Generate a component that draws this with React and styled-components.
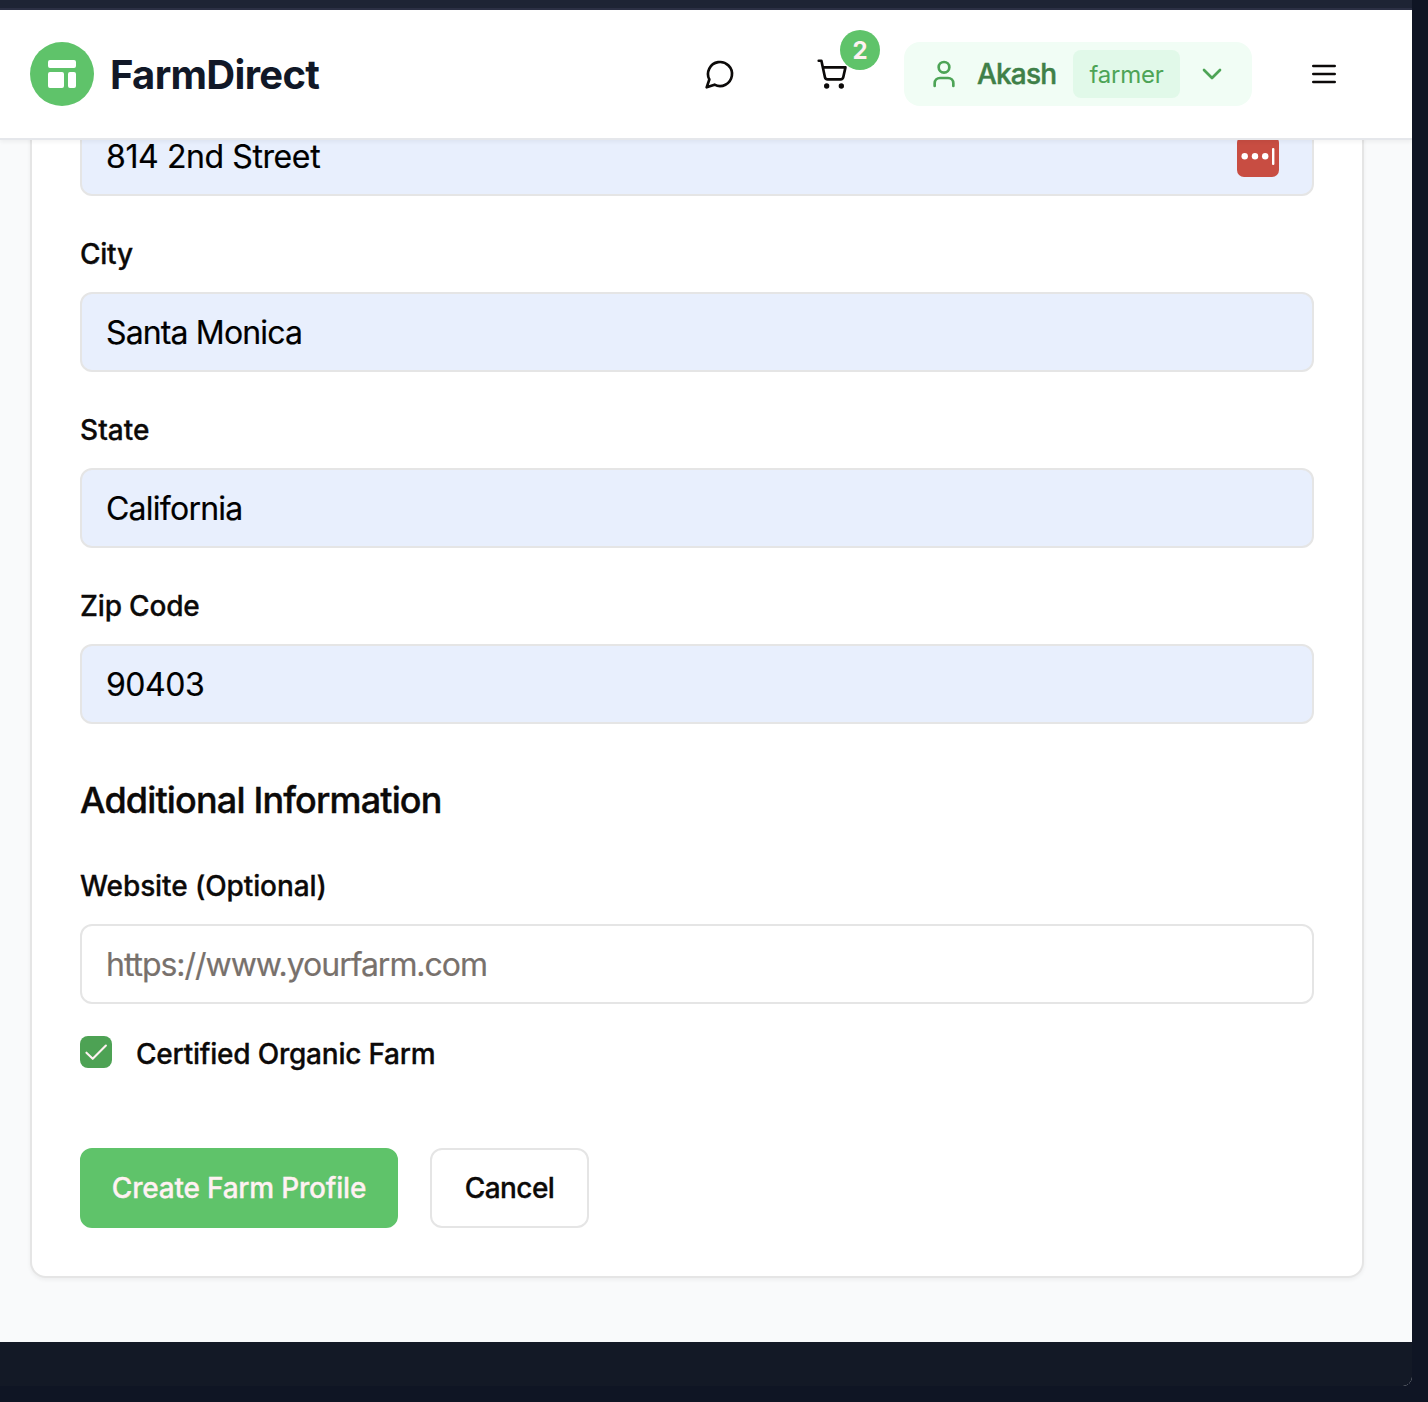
import React from "react";
import styled, { createGlobalStyle } from "styled-components";

const GlobalStyle = createGlobalStyle`
  *, *::before, *::after { box-sizing: border-box; }
  body {
    margin: 0;
    background: #0f1524;
    color: #0c0a09;
    font-family: Inter, "Liberation Sans", sans-serif;
    -webkit-font-smoothing: antialiased;
  }
  button, input { font-family: inherit; }
`;

const Desktop = styled.div`
  display: flex;
  flex-direction: column;
  height: 1402px;
  padding: 0 16px 16px 0;
  overflow: hidden;
`;

const BrowserBar = styled.div`
  flex: none;
  height: 10px;
  background: #1e2434;
  border-bottom: 2px solid #2c3044;
`;

const Window = styled.div`
  flex: 1;
  min-height: 0;
  display: flex;
  flex-direction: column;
  overflow: hidden;
  border-bottom-right-radius: 9px;
  background: #f9fafb;
`;

const Header = styled.header`
  position: relative;
  z-index: 1;
  flex: none;
  display: flex;
  align-items: center;
  height: 130px;
  padding: 0 56px 0 30px;
  background: #fff;
  border-bottom: 2px solid #e5e7eb;
  box-shadow: 0 2px 4px rgba(0, 0, 0, 0.05);
`;

const Brand = styled.div`
  display: flex;
  align-items: center;
  gap: 16px;
  margin-right: auto;
`;

const LogoMark = styled.span`
  display: flex;
  align-items: center;
  justify-content: center;
  width: 64px;
  height: 64px;
  border-radius: 50%;
  background: #5fc36a;
  color: #fff;
`;

const BrandName = styled.span`
  padding-top: 2px;
  font-size: 40px;
  line-height: 56px;
  font-weight: 700;
  letter-spacing: -0.7px;
  color: #111827;
`;

const IconButton = styled.button`
  position: relative;
  display: flex;
  align-items: center;
  justify-content: center;
  width: 80px;
  height: 80px;
  margin: 0 ${(p) => p.$after || 0}px 0 0;
  padding: 0;
  border: 0;
  background: none;
  color: #0c0a09;
`;

const CountBadge = styled.span`
  position: absolute;
  top: -4px;
  right: -8px;
  display: flex;
  align-items: center;
  justify-content: center;
  width: 40px;
  height: 40px;
  border-radius: 50%;
  background: #5fc36a;
  color: #fff1f2;
  font-size: 24px;
  font-weight: 700;
`;

const UserMenu = styled.button`
  display: flex;
  align-items: center;
  width: 348px;
  height: 64px;
  margin: 0 32px 0 0;
  padding: 0 24px;
  border: 0;
  border-radius: 16px;
  background: #f1fdf5;
  color: #4da456;
`;

const UserName = styled.span`
  width: 80px;
  margin: 0 16px 0 17px;
  font-size: 28px;
  font-weight: 500;
  letter-spacing: -0.82px;
  -webkit-text-stroke: 0.45px currentColor;
  text-align: left;
  white-space: nowrap;
  color: #3f8048;
`;

const RoleTag = styled.span`
  display: flex;
  align-items: center;
  justify-content: center;
  width: 107px;
  height: 48px;
  margin-right: 16px;
  border-radius: 8px;
  background: #e1f9e9;
  font-size: 24px;
  letter-spacing: -0.2px;
  color: #4da456;
`;

const Content = styled.main`
  flex: 1;
  min-height: 0;
  display: flex;
  flex-direction: column;
  justify-content: flex-end;
  overflow: hidden;
`;

const Card = styled.form`
  flex: none;
  margin: 0 48px 64px 30px;
  padding: 48px;
  border: 2px solid #e5e5e5;
  border-radius: 16px;
  background: #fff;
  box-shadow: 0 2px 4px rgba(0, 0, 0, 0.05);
`;

const Fields = styled.div`
  display: flex;
  flex-direction: column;
  gap: 44px;
`;

const Field = styled.div`
  display: flex;
  flex-direction: column;
  gap: 24px;
`;

const Label = styled.label`
  font-size: 28px;
  line-height: 28px;
  font-weight: 500;
  letter-spacing: ${(p) => p.$tracking || 0}px;
  -webkit-text-stroke: 0.3px currentColor;
`;

const InputShell = styled.div`
  display: flex;
  align-items: center;
  height: 80px;
  padding: 0 33px 0 24px;
  border: 2px solid #e5e5e5;
  border-radius: 12px;
  background: ${(p) => (p.$filled ? "#e8effd" : "#fff")};
`;

const TextInput = styled.input`
  flex: 1;
  min-width: 0;
  height: 60px;
  padding: 1px 0 0;
  border: 0;
  outline: 0;
  background: transparent;
  color: #000;
  font-size: 32px;
  letter-spacing: ${(p) => p.$tracking || 0}px;
  -webkit-text-stroke: 0.2px currentColor;
  &::placeholder { color: #78716c; opacity: 1; }
`;

const SectionTitle = styled.h3`
  margin: 56px 0 52px;
  font-size: 36px;
  line-height: 40px;
  font-weight: 500;
  letter-spacing: -0.84px;
  -webkit-text-stroke: 0.4px currentColor;
`;

const CheckRow = styled.div`
  display: flex;
  align-items: center;
  gap: 24px;
  height: 32px;
  margin-top: 32px;
`;

const CheckLabel = styled(Label)`
  padding-top: 4px;
`;

const CheckBox = styled.span`
  display: flex;
  align-items: center;
  justify-content: center;
  width: 32px;
  height: 32px;
  border-radius: 8px;
  background: #4da254;
  color: #fff1f2;
`;

const Actions = styled.div`
  display: flex;
  gap: 32px;
  margin-top: 80px;
`;

const Button = styled.button`
  width: ${(p) => p.$width}px;
  height: 80px;
  padding: 0;
  border: 2px solid ${(p) => (p.$primary ? "#5fc36a" : "#e5e5e5")};
  border-radius: 12px;
  background: ${(p) => (p.$primary ? "#5fc36a" : "#fff")};
  color: ${(p) => (p.$primary ? "#fff1f2" : "#0c0a09")};
  font-size: 28px;
  font-weight: 500;
  letter-spacing: ${(p) => p.$tracking || 0}px;
  -webkit-text-stroke: 0.3px currentColor;
  white-space: nowrap;
`;

const Footer = styled.footer`
  flex: none;
  height: 44px;
  background: #131926;
`;

const Icon = ({ children, size = 32, stroke = 2 }) => (
  <svg width={size} height={size} viewBox="0 0 24 24" fill="none" stroke="currentColor"
    strokeWidth={stroke} strokeLinecap="round" strokeLinejoin="round">
    {children}
  </svg>
);

const PasswordIcon = () => (
  <svg width="42" height="41" viewBox="0 0 42 41">
    <rect width="42" height="41" rx="7" fill="#c84d42" />
    <circle cx="7.7" cy="20.2" r="3.2" fill="#fff" />
    <circle cx="18" cy="20.2" r="3.2" fill="#fff" />
    <circle cx="28.2" cy="20.2" r="3.2" fill="#fff" />
    <rect x="35" y="12" width="2.4" height="17" rx="1" fill="#fff" />
  </svg>
);

const TextField = ({ id, label, labelTracking, tracking, value, placeholder, extra }) => (
  <Field>
    {label && <Label htmlFor={id} $tracking={labelTracking}>{label}</Label>}
    <InputShell $filled={!!value}>
      <TextInput id={id} defaultValue={value} placeholder={placeholder} $tracking={tracking} />
      {extra}
    </InputShell>
  </Field>
);

export default function App() {
  return (
    <>
      <GlobalStyle />
      <Desktop>
        <BrowserBar />
        <Window>
          <Header>
            <Brand>
              <LogoMark>
                <svg width="40" height="40" viewBox="0 0 20 20" fill="currentColor">
                  <path d="M3 4a1 1 0 0 1 1-1h12a1 1 0 0 1 1 1v2a1 1 0 0 1-1 1H4a1 1 0 0 1-1-1V4zM3 10a1 1 0 0 1 1-1h6a1 1 0 0 1 1 1v6a1 1 0 0 1-1 1H4a1 1 0 0 1-1-1v-6zM14 9a1 1 0 0 0-1 1v6a1 1 0 0 0 1 1h2a1 1 0 0 0 1-1v-6a1 1 0 0 0-1-1h-2z" />
                </svg>
              </LogoMark>
              <BrandName>FarmDirect</BrandName>
            </Brand>
            <IconButton type="button" aria-label="Messages" $after={32}>
              <Icon><path d="M7.9 20A9 9 0 1 0 4 16.1L2 22Z" /></Icon>
            </IconButton>
            <IconButton type="button" aria-label="Cart" $after={32}>
              <Icon>
                <circle cx="8" cy="21" r="1" />
                <circle cx="19" cy="21" r="1" />
                <path d="M2.05 2.05h2l2.66 12.42a2 2 0 0 0 2 1.58h9.78a2 2 0 0 0 1.95-1.57l1.65-7.43H5.12" />
              </Icon>
              <CountBadge>2</CountBadge>
            </IconButton>
            <UserMenu type="button">
              <Icon>
                <path d="M19 21v-2a4 4 0 0 0-4-4H9a4 4 0 0 0-4 4v2" />
                <circle cx="12" cy="7" r="4" />
              </Icon>
              <UserName>Akash</UserName>
              <RoleTag>farmer</RoleTag>
              <Icon><path d="m6 9 6 6 6-6" /></Icon>
            </UserMenu>
            <IconButton type="button" aria-label="Menu" $after={-8}>
              <Icon><path d="M4 6h16M4 12h16M4 18h16" /></Icon>
            </IconButton>
          </Header>
          <Content>
            <Card>
              <Fields>
                <TextField id="street" value="814 2nd Street" tracking={-0.4} extra={<PasswordIcon />} />
                <TextField id="city" label="City" labelTracking={-0.25} value="Santa Monica" tracking={-0.86} />
                <TextField id="state" label="State" labelTracking={0.05} value="California" tracking={-0.76} />
                <TextField id="zip" label="Zip Code" labelTracking={-0.17} value="90403" tracking={-0.5} />
              </Fields>
              <SectionTitle>Additional Information</SectionTitle>
              <TextField
                id="website"
                label="Website (Optional)"
                labelTracking={-0.1}
                placeholder="https://www.yourfarm.com"
                tracking={-1.04}
              />
              <CheckRow>
                <CheckBox role="checkbox" aria-checked="true">
                  <Icon size={28} stroke={1.8}><path d="M20.5 6.5 9.2 17.8 3.8 12.6" /></Icon>
                </CheckBox>
                <CheckLabel $tracking={-0.22}>Certified Organic Farm</CheckLabel>
              </CheckRow>
              <Actions>
                <Button type="button" $primary $width={318} $tracking={-0.21}>Create Farm Profile</Button>
                <Button type="button" $width={159} $tracking={-0.55}>Cancel</Button>
              </Actions>
            </Card>
            <Footer />
          </Content>
        </Window>
      </Desktop>
    </>
  );
}
